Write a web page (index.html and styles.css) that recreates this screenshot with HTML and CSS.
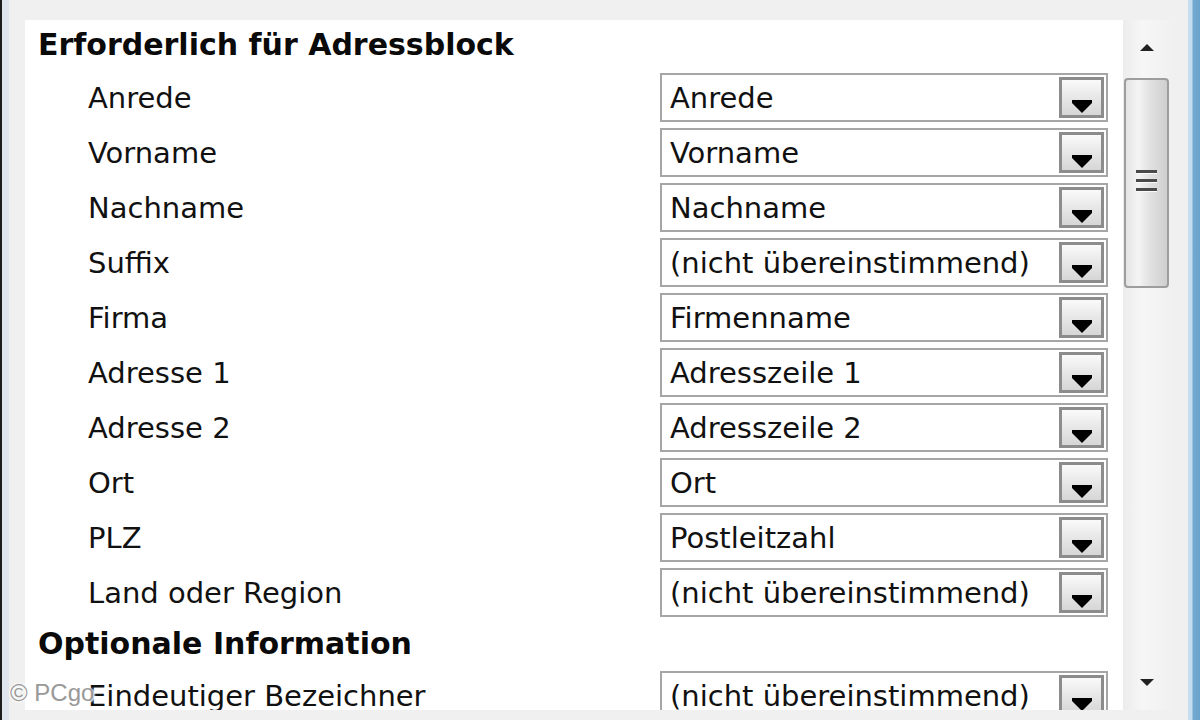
FILE: index.html
```html
<!DOCTYPE html>
<html lang="de">
<head>
  <meta charset="UTF-8" />
  <title>Felder zuordnen</title>
  <link rel="stylesheet" href="styles.css">
</head>
<body>
  <div class="window">
    <div class="edge-left"></div>
    <div class="main">
      <div class="panel">
        <div class="list">
          <div class="section-head">Erforderlich für Adressblock</div>
          <div class="row"><span class="label">Anrede</span><div class="combo"><span class="value">Anrede</span><span class="drop"><svg width="22" height="16" viewBox="0 0 22 16"><polygon points="1,2 21,2 21,5 11,15 1,5" fill="#000"/></svg></span></div></div>
          <div class="row"><span class="label">Vorname</span><div class="combo"><span class="value">Vorname</span><span class="drop"><svg width="22" height="16" viewBox="0 0 22 16"><polygon points="1,2 21,2 21,5 11,15 1,5" fill="#000"/></svg></span></div></div>
          <div class="row"><span class="label">Nachname</span><div class="combo"><span class="value">Nachname</span><span class="drop"><svg width="22" height="16" viewBox="0 0 22 16"><polygon points="1,2 21,2 21,5 11,15 1,5" fill="#000"/></svg></span></div></div>
          <div class="row"><span class="label">Suffix</span><div class="combo"><span class="value">(nicht übereinstimmend)</span><span class="drop"><svg width="22" height="16" viewBox="0 0 22 16"><polygon points="1,2 21,2 21,5 11,15 1,5" fill="#000"/></svg></span></div></div>
          <div class="row"><span class="label">Firma</span><div class="combo"><span class="value">Firmenname</span><span class="drop"><svg width="22" height="16" viewBox="0 0 22 16"><polygon points="1,2 21,2 21,5 11,15 1,5" fill="#000"/></svg></span></div></div>
          <div class="row"><span class="label">Adresse 1</span><div class="combo"><span class="value">Adresszeile 1</span><span class="drop"><svg width="22" height="16" viewBox="0 0 22 16"><polygon points="1,2 21,2 21,5 11,15 1,5" fill="#000"/></svg></span></div></div>
          <div class="row"><span class="label">Adresse 2</span><div class="combo"><span class="value">Adresszeile 2</span><span class="drop"><svg width="22" height="16" viewBox="0 0 22 16"><polygon points="1,2 21,2 21,5 11,15 1,5" fill="#000"/></svg></span></div></div>
          <div class="row"><span class="label">Ort</span><div class="combo"><span class="value">Ort</span><span class="drop"><svg width="22" height="16" viewBox="0 0 22 16"><polygon points="1,2 21,2 21,5 11,15 1,5" fill="#000"/></svg></span></div></div>
          <div class="row"><span class="label">PLZ</span><div class="combo"><span class="value">Postleitzahl</span><span class="drop"><svg width="22" height="16" viewBox="0 0 22 16"><polygon points="1,2 21,2 21,5 11,15 1,5" fill="#000"/></svg></span></div></div>
          <div class="row"><span class="label">Land oder Region</span><div class="combo"><span class="value">(nicht übereinstimmend)</span><span class="drop"><svg width="22" height="16" viewBox="0 0 22 16"><polygon points="1,2 21,2 21,5 11,15 1,5" fill="#000"/></svg></span></div></div>
          <div class="section-head second">Optionale Information</div>
          <div class="row"><span class="label">Eindeutiger Bezeichner</span><div class="combo"><span class="value">(nicht übereinstimmend)</span><span class="drop"><svg width="22" height="16" viewBox="0 0 22 16"><polygon points="1,2 21,2 21,5 11,15 1,5" fill="#000"/></svg></span></div></div>
        </div>
        <div class="scrollbar">
          <div class="arrow">
            <svg width="16" height="10" viewBox="0 0 16 10"><polygon points="8,1 15,8 1,8" fill="#222"/></svg>
          </div>
          <div class="thumb">
            <div class="grip"><i></i><i></i><i></i></div>
          </div>
          <div class="track"></div>
          <div class="arrow">
            <svg width="16" height="10" viewBox="0 0 16 10"><polygon points="1,2 15,2 8,9" fill="#222"/></svg>
          </div>
        </div>
      </div>
    </div>
    <div class="edge-right"></div>
  </div>
  <div class="watermark">© PCgo</div>
</body>
</html>
```

FILE: styles.css
```css
body {
  margin: 0;
  width: 1200px;
  height: 720px;
  overflow: hidden;
  background: #f0f0f0;
  font-family: 'DejaVu Sans', 'Liberation Sans', sans-serif;
  color: #111;
}
.window {
  display: flex;
  height: 720px;
}
.edge-left {
  width: 7px;
  border-left: 2px solid #1c1c1c;
  background: #dfe5ec;
}
.edge-right {
  width: 12px;
  background: linear-gradient(to right, #c4def0 0, #c4def0 4px, #72a9d0 5px, #6aa3cc 100%);
}
.main {
  flex: 1;
  padding: 20px 18px 10px 16px;
  display: flex;
}
.panel {
  flex: 1;
  display: flex;
  overflow: hidden;
}
.list {
  flex: 1;
  background: #fff;
  overflow: hidden;
}
.section-head {
  height: 50px;
  line-height: 50px;
  padding-left: 13px;
  font-size: 30px;
  font-weight: bold;
  color: #0a0a0a;
}
.section-head.second {
  height: 48px;
  line-height: 48px;
}
.row {
  height: 55px;
  display: flex;
  align-items: center;
}
.label {
  flex: 1;
  padding-left: 63px;
  font-size: 29px;
  line-height: 30px;
}
.combo {
  width: 444px;
  height: 45px;
  margin-right: 15px;
  border: 2px solid #a6a6a6;
  display: flex;
  align-items: center;
  justify-content: space-between;
  background: #fff;
}
.combo .value {
  padding-left: 8px;
  font-size: 29px;
  line-height: 30px;
  white-space: nowrap;
}
.drop {
  width: 39px;
  height: 35px;
  margin-right: 2px;
  border: 3px solid #8c8c8c;
  background: linear-gradient(#fafafa, #e9e9e9 45%, #d6d6d6);
  display: flex;
  align-items: flex-end;
  justify-content: center;
}
.drop svg {
  margin-bottom: 1px;
}
.scrollbar {
  width: 47px;
  display: flex;
  flex-direction: column;
  background: linear-gradient(to right, #ececec, #f6f6f6 40%, #f1f1f1);
}
.arrow {
  height: 56px;
  display: flex;
  align-items: center;
  justify-content: center;
}
.thumb {
  height: 206px;
  margin: 2px 1px 0 1px;
  border: 2px solid #9d9d9d;
  border-radius: 4px;
  background: linear-gradient(to right, #e4e4e4, #f4f4f4 30%, #e0e0e0 60%, #cfcfcf);
  display: flex;
  align-items: center;
  justify-content: center;
}
.grip {
  display: flex;
  flex-direction: column;
  gap: 5px;
  margin-top: -4px;
}
.grip i {
  display: block;
  width: 21px;
  height: 3px;
  background: #4a4a4a;
  border-bottom: 1px solid #fafafa;
}
.track {
  flex: 1;
}
.watermark {
  position: absolute;
  left: 10px;
  top: 679px;
  font-family: 'Liberation Sans', sans-serif;
  font-size: 24px;
  color: #999;
  text-shadow: 0 0 2px #fff, 0 0 3px #fff, 1px 1px 2px #fff;
}
```
